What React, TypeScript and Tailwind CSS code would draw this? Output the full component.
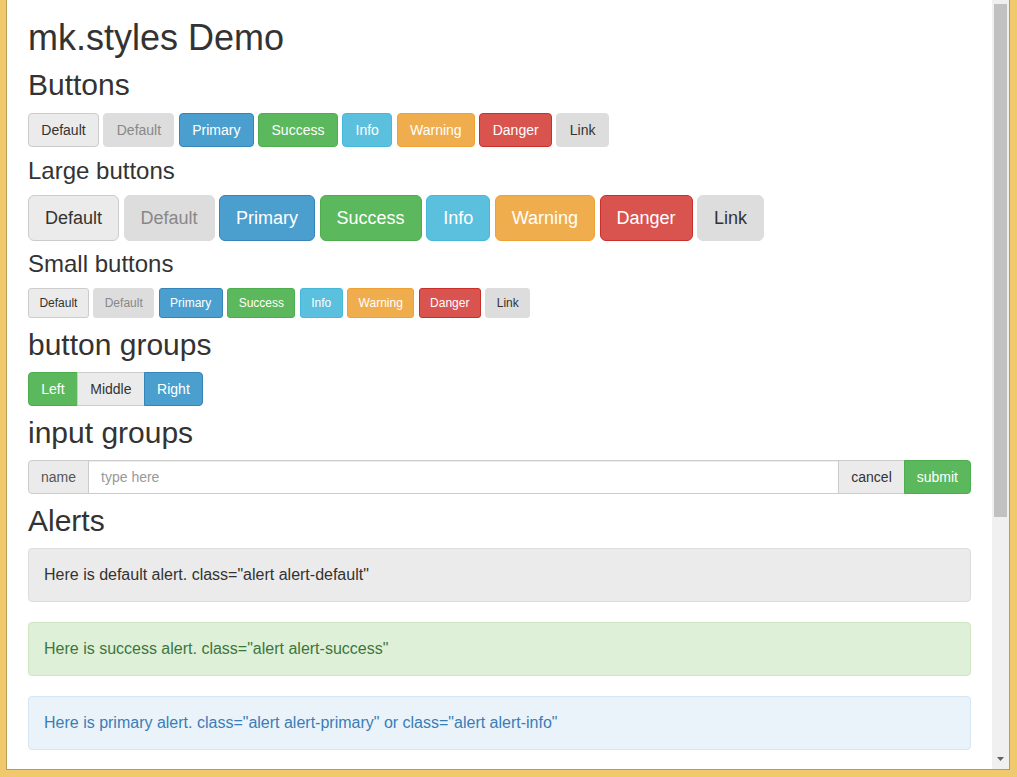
import React from 'react';

type Variant = 'default' | 'disabled' | 'primary' | 'success' | 'info' | 'warning' | 'danger' | 'link';
type Size = 'md' | 'lg' | 'sm';

const variants: Record<Variant, string> = {
  default: 'bg-[#ebebeb] border-[#cccccc] text-[#333]',
  disabled: 'bg-[#dddddd] border-[#dddddd] text-[#888]',
  primary: 'bg-[#4a9fcf] border-[#3585b8] text-white',
  success: 'bg-[#5cb85c] border-[#4cae4c] text-white',
  info: 'bg-[#5bc0de] border-[#46b8da] text-white',
  warning: 'bg-[#f0ad4e] border-[#eea236] text-white',
  danger: 'bg-[#d9534f] border-[#c9302c] text-white',
  link: 'bg-[#dddddd] border-[#dddddd] text-[#333]',
};

const sizes: Record<Size, string> = {
  md: 'h-[34px] px-[12.3px] text-[14px] rounded-[4px]',
  lg: 'h-[46px] px-[16px] text-[18px] rounded-[6px]',
  sm: 'h-[30px] px-[10.4px] text-[12px] rounded-[3px]',
};

const buttons: { label: string; v: Variant }[] = [
  { label: 'Default', v: 'default' },
  { label: 'Default', v: 'disabled' },
  { label: 'Primary', v: 'primary' },
  { label: 'Success', v: 'success' },
  { label: 'Info', v: 'info' },
  { label: 'Warning', v: 'warning' },
  { label: 'Danger', v: 'danger' },
  { label: 'Link', v: 'link' },
];

const Btn: React.FC<{ label: string; v: Variant; size: Size }> = ({ label, v, size }) => (
  <span className={`inline-flex items-center border ${variants[v]} ${sizes[size]}`}>{label}</span>
);

const ButtonRow: React.FC<{ size: Size }> = ({ size }) => (
  <div className="flex gap-[4.5px]">
    {buttons.map((b, i) => (
      <Btn key={i} label={b.label} v={b.v} size={size} />
    ))}
  </div>
);

const H2: React.FC<{ children: React.ReactNode; className?: string }> = ({ children, className = 'mt-[10px] mb-[11px]' }) => (
  <h2 className={`${className} text-[30px] leading-[33px] font-normal`}>{children}</h2>
);

const H3: React.FC<{ children: React.ReactNode; className?: string }> = ({ children, className = 'mt-[10px] mb-[11px]' }) => (
  <h3 className={`${className} text-[24px] leading-[26px] font-normal`}>{children}</h3>
);

const alerts = [
  { text: 'Here is default alert. class="alert alert-default"', cls: 'bg-[#ebebeb] border-[#dddddd] text-[#333]' },
  { text: 'Here is success alert. class="alert alert-success"', cls: 'bg-[#dff0d8] border-[#d0e6c3] text-[#3c763d]' },
  {
    text: 'Here is primary alert. class="alert alert-primary" or class="alert alert-info"',
    cls: 'bg-[#ebf3fa] border-[#d6e6f3] text-[#3a7db6]',
  },
];

export default function App() {
  return (
    <div className="w-[1017px] h-[777px] flex bg-[#efc96c] pl-[6px] pr-[7px] pb-[7px] font-['Liberation_Sans',Arial,sans-serif]">
      <div className="flex-1 flex border-x border-b border-[#b99d57] bg-white overflow-hidden">
        <div className="flex-1 flex flex-col px-[21px] text-[#333] overflow-hidden">
          <h1 className="mt-[18px] text-[36px] leading-[40px] font-normal">mk.styles Demo</h1>

          <H2 className="mt-[10px] mb-[12px]">Buttons</H2>
          <ButtonRow size="md" />

          <H3 className="mt-[11px] mb-[11px]">Large buttons</H3>
          <ButtonRow size="lg" />

          <H3>Small buttons</H3>
          <ButtonRow size="sm" />

          <H2>button groups</H2>
          <div className="flex text-[14px]">
            <span className="h-[34px] px-[12.3px] inline-flex items-center border border-[#4cae4c] bg-[#5cb85c] text-white rounded-l-[4px]">
              Left
            </span>
            <span className="h-[34px] px-[12.3px] -ml-px inline-flex items-center border border-[#cccccc] bg-[#ebebeb] text-[#333]">
              Middle
            </span>
            <span className="h-[34px] px-[12.3px] -ml-px inline-flex items-center border border-[#3585b8] bg-[#4a9fcf] text-white rounded-r-[4px]">
              Right
            </span>
          </div>

          <H2>input groups</H2>
          <div className="flex h-[34px] text-[14px]">
            <span className="px-[12px] inline-flex items-center border border-[#cccccc] bg-[#ebebeb] text-[#555] rounded-l-[4px]">
              name
            </span>
            <input
              className="flex-1 min-w-0 -ml-px px-[12px] border border-[#cccccc] bg-white text-[#555] placeholder:text-[#999] shadow-[inset_0_1px_1px_rgba(0,0,0,0.075)] outline-none"
              placeholder="type here"
            />
            <span className="-ml-px px-[12px] inline-flex items-center border border-[#cccccc] bg-[#ebebeb] text-[#333]">
              cancel
            </span>
            <span className="-ml-px px-[12px] inline-flex items-center border border-[#4cae4c] bg-[#5cb85c] text-white rounded-r-[4px]">
              submit
            </span>
          </div>

          <H2>Alerts</H2>
          <div className="flex flex-col gap-[20px]">
            {alerts.map((a, i) => (
              <div key={i} className={`shrink-0 border rounded-[4px] p-[15px] text-[16px] leading-[22px] ${a.cls}`}>
                {a.text}
              </div>
            ))}
          </div>
        </div>

        {/* window scrollbar */}
        <div className="w-[17px] shrink-0 flex flex-col items-center bg-[#f0f0f0]">
          <div className="mt-[4px] w-[13px] h-[513px] bg-[#c1c1c1]" />
          <svg className="mt-auto mb-[8px]" width="7" height="4" viewBox="0 0 7 4">
            <path d="M0 0h7L3.5 4z" fill="#606060" />
          </svg>
        </div>
      </div>
    </div>
  );
}
